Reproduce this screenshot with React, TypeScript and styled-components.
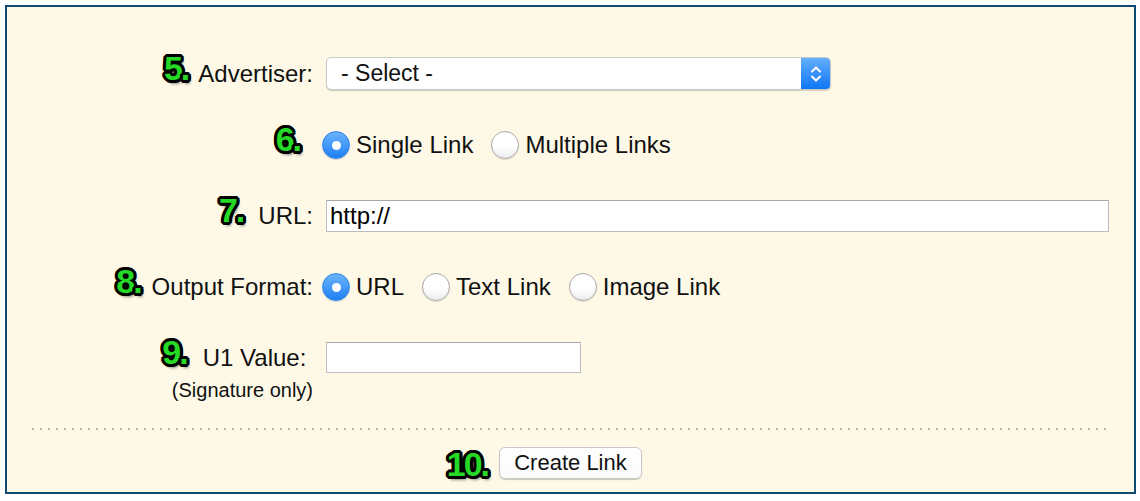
import styled, { createGlobalStyle } from "styled-components";

const GlobalStyle = createGlobalStyle`
  html, body {
    margin: 0;
    padding: 0;
    background: #ffffff;
  }
  body {
    font-family: "Liberation Sans", Arial, sans-serif;
    color: #111111;
  }
  * {
    box-sizing: border-box;
  }
`;

const Step = ({ n, gap }: { n: string; gap: number }) => (
  <Badge $gap={gap}>{n}.</Badge>
);

const Radio = ({ checked, label }: { checked?: boolean; label: string }) => (
  <Option>
    <Dot $checked={checked} />
    <span>{label}</span>
  </Option>
);

const App = () => {
  return (
    <>
      <GlobalStyle />
      <Panel>
        <Form>
          <Label>
            <Step n="5" gap={8} />
            Advertiser:
          </Label>
          <Field>
            <Select>
              <SelectValue>- Select -</SelectValue>
              <SelectArrow>
                <svg width="12" height="20" viewBox="0 0 12 20" fill="none">
                  <path d="M2 7.5 L6 3.5 L10 7.5" stroke="#fff" strokeWidth="2" strokeLinecap="round" strokeLinejoin="round" />
                  <path d="M2 12.5 L6 16.5 L10 12.5" stroke="#fff" strokeWidth="2" strokeLinecap="round" strokeLinejoin="round" />
                </svg>
              </SelectArrow>
            </Select>
          </Field>

          <Label>
            <Step n="6" gap={11} />
          </Label>
          <Options>
            <Radio checked label="Single Link" />
            <Radio label="Multiple Links" />
          </Options>

          <Label>
            <Step n="7" gap={13} />
            URL:
          </Label>
          <Field>
            <TextInput $width="783px" defaultValue="http://" />
          </Field>

          <Label>
            <Step n="8" gap={9} />
            Output Format:
          </Label>
          <Options>
            <Radio checked label="URL" />
            <Radio label="Text Link" />
            <Radio label="Image Link" />
          </Options>

          <Label $top>
            <LabelLine>
              <Step n="9" gap={14} />
              U1 Value:{"\u00a0"}
            </LabelLine>
            <Hint>(Signature only)</Hint>
          </Label>
          <Field $top>
            <TextInput $width="255px" $height="31px" defaultValue="" />
          </Field>
        </Form>

        <Divider />

        <Footer>
          <ButtonWrap>
            <FooterBadge>10.</FooterBadge>
            <Button>Create Link</Button>
          </ButtonWrap>
        </Footer>
      </Panel>
    </>
  );
};

const Panel = styled.div`
  margin: 5px;
  width: 1131px;
  height: 489px;
  border: 2px solid #0f4a75;
  background: #fef9e7;
`;

const Form = styled.div`
  display: grid;
  grid-template-columns: 306px 787px;
  column-gap: 9px;
  row-gap: 41px;
  align-items: center;
  padding-top: 50px;
`;

const Label = styled.div<{ $top?: boolean }>`
  text-align: right;
  font-size: 24px;
  line-height: 28px;
  white-space: nowrap;
  align-self: ${(p) => (p.$top ? "start" : "center")};
`;

const LabelLine = styled.div`
  line-height: 31px;
`;

const Hint = styled.div`
  margin-top: 5px;
  font-size: 20px;
  line-height: 24px;
`;

const badgeText = `
  font-family: "Liberation Sans", Arial, sans-serif;
  font-weight: 700;
  font-size: 34px;
  line-height: 0;
  color: #26d926;
  letter-spacing: -2px;
  text-shadow:
    -2px -2px 0 #000, 0 -2px 0 #000, 2px -2px 0 #000,
    -2px 0 0 #000, 2px 0 0 #000,
    -2px 2px 0 #000, 0 2px 0 #000, 2px 2px 0 #000,
    -1px -3px 0 #000, 1px -3px 0 #000, -3px -1px 0 #000, 3px -1px 0 #000,
    -3px 1px 0 #000, 3px 1px 0 #000, -1px 3px 0 #000, 1px 3px 0 #000,
    2px 4px 3px rgba(0, 0, 0, 0.45);
`;

const Badge = styled.span<{ $gap: number }>`
  ${badgeText}
  position: relative;
  top: -2px;
  margin-right: ${(p) => p.$gap + 2}px;
`;

const Field = styled.div<{ $top?: boolean }>`
  padding-left: 4px;
  align-self: ${(p) => (p.$top ? "start" : "center")};
  display: flex;
`;

const Select = styled.div`
  width: 505px;
  height: 33px;
  display: flex;
  background: #ffffff;
  border: 1px solid #c9c9c9;
  border-radius: 5px;
  box-shadow: 0 1px 1px rgba(0, 0, 0, 0.18);
  overflow: hidden;
`;

const SelectValue = styled.div`
  flex: 1;
  padding-left: 14px;
  font-size: 23px;
  line-height: 31px;
  color: #111;
`;

const SelectArrow = styled.div`
  width: 29px;
  display: flex;
  align-items: center;
  justify-content: center;
  background: linear-gradient(#64aefc, #0f76f6);
`;

const TextInput = styled.input<{ $width: string; $height?: string }>`
  width: ${(p) => p.$width};
  height: ${(p) => p.$height || "32px"};
  border: 1px solid #bdbdbd;
  border-top-color: #a9a9a9;
  background: #ffffff;
  padding: 0 3px;
  font-family: "Liberation Sans", Arial, sans-serif;
  font-size: 24px;
  color: #000;
  outline: none;
`;

const Options = styled.div`
  display: flex;
  align-items: center;
  gap: 18px;
  font-size: 24px;
  line-height: 28px;
`;

const Option = styled.label`
  display: flex;
  align-items: center;
  gap: 6px;
`;

const Dot = styled.span<{ $checked?: boolean }>`
  width: 28px;
  height: 28px;
  border-radius: 50%;
  display: flex;
  align-items: center;
  justify-content: center;
  ${(p) =>
    p.$checked
      ? `
    background: linear-gradient(#6ab3fd, #1f80f4);
    border: 1px solid #2f86ea;
    box-shadow: 0 1px 1px rgba(0, 0, 0, 0.15);
    &::after {
      content: "";
      width: 9px;
      height: 9px;
      border-radius: 50%;
      background: #ffffff;
    }
  `
      : `
    background: linear-gradient(#ffffff 55%, #ececec);
    border: 1px solid #a9a9a9;
    box-shadow: 0 1px 1px rgba(0, 0, 0, 0.12);
  `}
`;

const Divider = styled.div`
  margin: 26px 27px 0 25px;
  height: 2px;
  background-image: linear-gradient(to right, #b3b3b3 2px, transparent 2px);
  background-size: 8px 2px;
  background-repeat: repeat-x;
`;

const Footer = styled.div`
  margin-top: 17px;
  display: flex;
  justify-content: center;
`;

const ButtonWrap = styled.div`
  position: relative;
`;

const FooterBadge = styled.span`
  ${badgeText}
  position: absolute;
  right: calc(100% + 11px);
  top: 17px;
  white-space: nowrap;
`;

const Button = styled.button`
  width: 143px;
  height: 32px;
  background: linear-gradient(#ffffff, #fafafa);
  border: 1px solid #c8c8c8;
  border-radius: 6px;
  box-shadow: 0 1px 1px rgba(0, 0, 0, 0.2);
  font-family: "Liberation Sans", Arial, sans-serif;
  font-size: 22px;
  color: #111;
  padding: 0;
`;

export default App;
